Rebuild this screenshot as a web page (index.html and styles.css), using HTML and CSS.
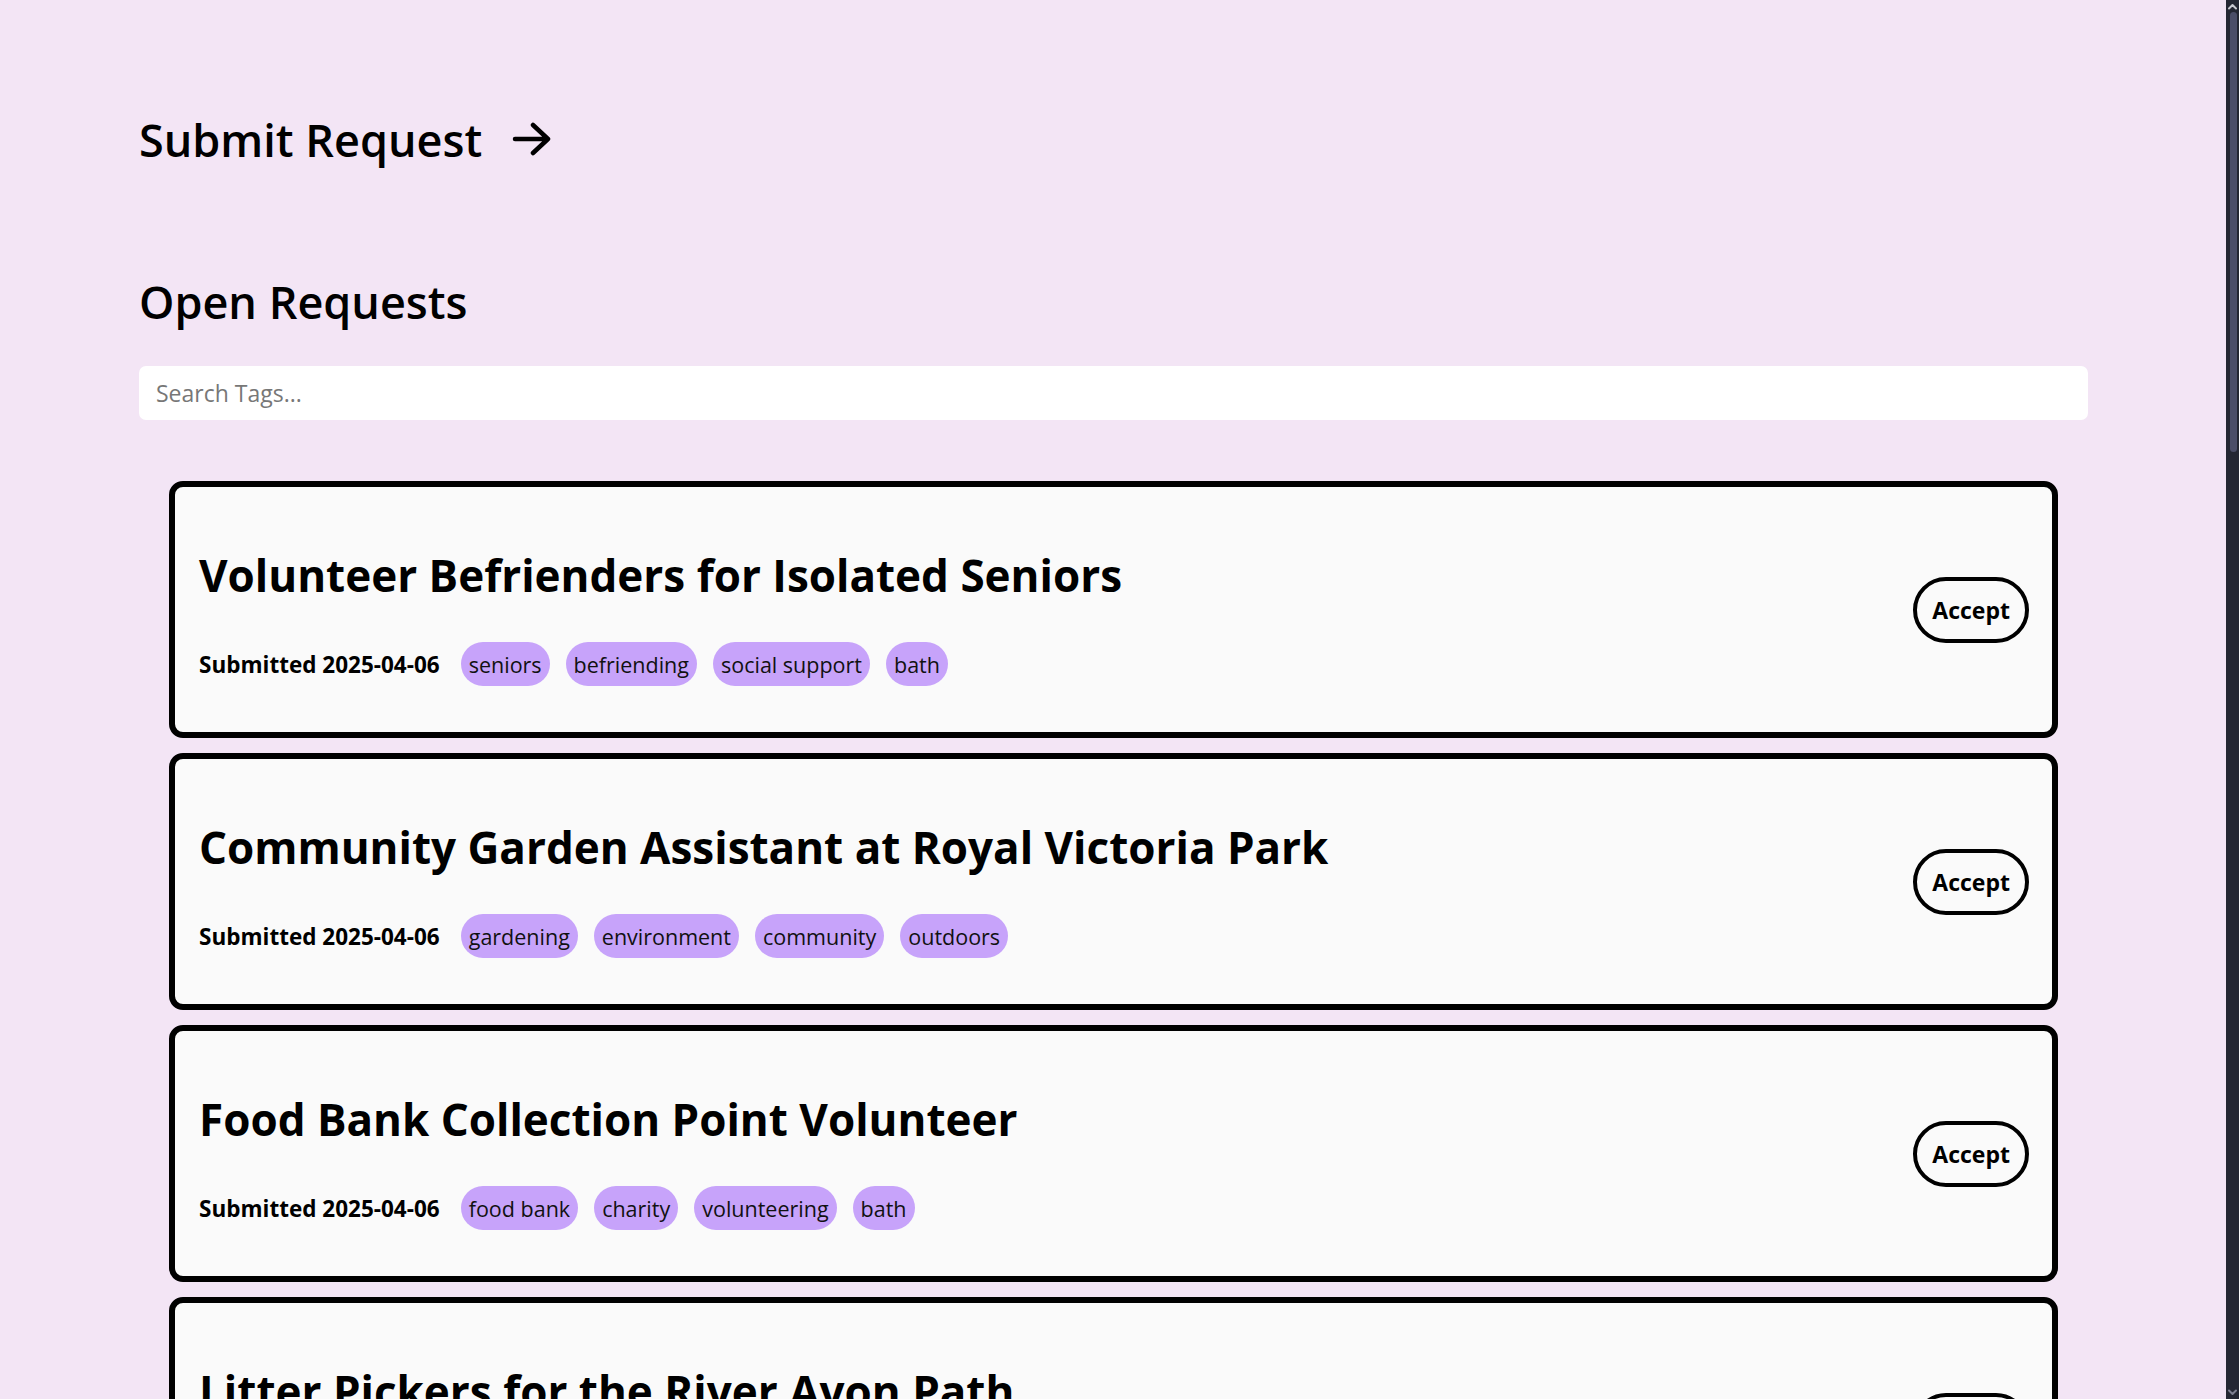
FILE: index.html
```html
<!DOCTYPE html>
<html lang="en">
<head>
<meta charset="utf-8">
<title>Open Requests</title>
<link rel="stylesheet" href="styles.css">
</head>
<body>
<div class="viewport">
<main class="page">
  <a class="submit-link" href="#">
    <span>Submit Request</span>
    <svg class="arrow" viewBox="0 0 40 34" width="40" height="34" aria-hidden="true">
      <path d="M3 17 H36 M21 3 L36 17 L21 31" fill="none" stroke="#000" stroke-width="4.5" stroke-linecap="round" stroke-linejoin="round"/>
    </svg>
  </a>

  <h2 class="section-title">Open Requests</h2>

  <input class="search" type="text" placeholder="Search Tags...">

  <ul class="requests">
    <li class="card">
      <div class="card-body">
        <h3 class="card-title">Volunteer Befrienders for Isolated Seniors</h3>
        <div class="meta"><span class="date">Submitted 2025-04-06</span><span class="tag">seniors</span><span class="tag">befriending</span><span class="tag">social support</span><span class="tag">bath</span></div>
      </div>
      <button class="accept">Accept</button>
    </li>
    <li class="card">
      <div class="card-body">
        <h3 class="card-title">Community Garden Assistant at Royal Victoria Park</h3>
        <div class="meta"><span class="date">Submitted 2025-04-06</span><span class="tag">gardening</span><span class="tag">environment</span><span class="tag">community</span><span class="tag">outdoors</span></div>
      </div>
      <button class="accept">Accept</button>
    </li>
    <li class="card">
      <div class="card-body">
        <h3 class="card-title">Food Bank Collection Point Volunteer</h3>
        <div class="meta"><span class="date">Submitted 2025-04-06</span><span class="tag">food bank</span><span class="tag">charity</span><span class="tag">volunteering</span><span class="tag">bath</span></div>
      </div>
      <button class="accept">Accept</button>
    </li>
    <li class="card">
      <div class="card-body">
        <h3 class="card-title">Litter Pickers for the River Avon Path</h3>
        <div class="meta"><span class="date">Submitted 2025-04-06</span><span class="tag">litter picking</span><span class="tag">environment</span><span class="tag">river avon</span><span class="tag">bath</span></div>
      </div>
      <button class="accept">Accept</button>
    </li>
    <li class="card">
      <div class="card-body">
        <h3 class="card-title">Reading Buddies at a Local Primary School</h3>
        <div class="meta"><span class="date">Submitted 2025-04-06</span><span class="tag">education</span><span class="tag">children</span><span class="tag">reading</span></div>
      </div>
      <button class="accept">Accept</button>
    </li>
    <li class="card">
      <div class="card-body">
        <h3 class="card-title">Dog Walking for Housebound Residents</h3>
        <div class="meta"><span class="date">Submitted 2025-04-06</span><span class="tag">animals</span><span class="tag">dog walking</span><span class="tag">seniors</span><span class="tag">bath</span></div>
      </div>
      <button class="accept">Accept</button>
    </li>
    <li class="card">
      <div class="card-body">
        <h3 class="card-title">Charity Shop Assistant on Milsom Street</h3>
        <div class="meta"><span class="date">Submitted 2025-04-06</span><span class="tag">retail</span><span class="tag">charity</span><span class="tag">bath</span></div>
      </div>
      <button class="accept">Accept</button>
    </li>
    <li class="card">
      <div class="card-body">
        <h3 class="card-title">Welcome Host at the Roman Baths</h3>
        <div class="meta"><span class="date">Submitted 2025-04-06</span><span class="tag">heritage</span><span class="tag">tourism</span><span class="tag">bath</span></div>
      </div>
      <button class="accept">Accept</button>
    </li>
    <li class="card">
      <div class="card-body">
        <h3 class="card-title">Youth Football Coach Assistant</h3>
        <div class="meta"><span class="date">Submitted 2025-04-06</span><span class="tag">sports</span><span class="tag">youth</span><span class="tag">coaching</span></div>
      </div>
      <button class="accept">Accept</button>
    </li>
    <li class="card">
      <div class="card-body">
        <h3 class="card-title">Volunteer Driver for Hospital Appointments</h3>
        <div class="meta"><span class="date">Submitted 2025-04-06</span><span class="tag">transport</span><span class="tag">health</span><span class="tag">driving</span></div>
      </div>
      <button class="accept">Accept</button>
    </li>
    <li class="card">
      <div class="card-body">
        <h3 class="card-title">Community Café Kitchen Helper</h3>
        <div class="meta"><span class="date">Submitted 2025-04-06</span><span class="tag">cooking</span><span class="tag">community</span><span class="tag">food</span></div>
      </div>
      <button class="accept">Accept</button>
    </li>
    <li class="card">
      <div class="card-body">
        <h3 class="card-title">Digital Skills Tutor for Older Adults</h3>
        <div class="meta"><span class="date">Submitted 2025-04-06</span><span class="tag">technology</span><span class="tag">seniors</span><span class="tag">education</span></div>
      </div>
      <button class="accept">Accept</button>
    </li>
    <li class="card">
      <div class="card-body">
        <h3 class="card-title">Evening Support at the Homeless Shelter</h3>
        <div class="meta"><span class="date">Submitted 2025-04-06</span><span class="tag">housing</span><span class="tag">support</span><span class="tag">charity</span><span class="tag">bath</span></div>
      </div>
      <button class="accept">Accept</button>
    </li>
    <li class="card">
      <div class="card-body">
        <h3 class="card-title">Tree Planting Day at Alice Park</h3>
        <div class="meta"><span class="date">Submitted 2025-04-06</span><span class="tag">environment</span><span class="tag">trees</span><span class="tag">outdoors</span></div>
      </div>
      <button class="accept">Accept</button>
    </li>
  </ul>
</main>
</div>
<div class="scrollbar" aria-hidden="true">
  <svg class="sb-btn" viewBox="0 0 13 12" width="13" height="12"><path d="M3 8.5 L6.5 5 L10 8.5" fill="none" stroke="#c8c9d0" stroke-width="2" stroke-linecap="round" stroke-linejoin="round"/></svg>
  <div class="sb-track"><div class="sb-thumb"></div></div>
  <svg class="sb-btn" viewBox="0 0 13 12" width="13" height="12"><path d="M3 3.5 L6.5 7 L10 3.5" fill="none" stroke="#7d7f90" stroke-width="2" stroke-linecap="round" stroke-linejoin="round"/></svg>
</div>
</body>
</html>
```

FILE: styles.css
```css
html,
body {
  height: 100%;
}

body {
  margin: 0;
  display: flex;
  overflow: hidden;
  background: #f3e5f5;
  color: #000;
  font-family: "Open Sans", "Noto Sans", sans-serif;
}

.viewport {
  flex: 1;
  min-width: 0;
  height: 100vh;
  overflow: hidden;
}

.scrollbar {
  flex: 0 0 13px;
  height: 100vh;
  display: flex;
  flex-direction: column;
  background: #242733;
}

.sb-btn {
  display: block;
  flex: 0 0 12px;
}

.sb-track {
  flex: 1;
  padding: 0 2px 0 4px;
}

.sb-thumb {
  height: 440px;
  border-radius: 4px;
  background: #4b4e68;
}

.page {
  padding: 113px 138px 80px 139px;
}

.submit-link {
  display: inline-flex;
  align-items: center;
  gap: 30px;
  color: #000;
  text-decoration: none;
  font-size: 45px;
  line-height: 54px;
  font-weight: 600;
}

.arrow {
  display: block;
  margin-top: -2px;
}

.section-title {
  margin: 108px 0 37px;
  font-size: 45px;
  line-height: 54px;
  font-weight: 600;
}

.search {
  display: block;
  box-sizing: border-box;
  width: 100%;
  height: 54px;
  margin: 0;
  padding: 0 17px;
  border: none;
  border-radius: 7px;
  background: #fff;
  font-family: "Open Sans", "Noto Sans", sans-serif;
  font-size: 23px;
  color: #000;
  outline: none;
}
.search::placeholder {
  color: #777;
}

.requests {
  list-style: none;
  margin: 61px 30px 0;
  padding: 0;
  display: flex;
  flex-direction: column;
  gap: 15px;
}

.card {
  box-sizing: border-box;
  height: 257px;
  display: flex;
  align-items: center;
  justify-content: space-between;
  padding: 0 23px 0 24px;
  border: 6px solid #000;
  border-radius: 14px;
  background: #fafafa;
}

.card-body {
  display: flex;
  flex-direction: column;
  gap: 40px;
  padding-top: 16px;
}

.card-title {
  margin: 0;
  font-size: 44px;
  line-height: 53px;
  font-weight: 700;
}

.meta {
  display: flex;
  align-items: center;
  gap: 16px;
}

.date {
  font-size: 22.5px;
  font-weight: 700;
  margin-right: 5px;
}

.tag {
  display: inline-flex;
  align-items: center;
  height: 44px;
  padding: 0 8px;
  border-radius: 22px;
  background: #c7a3fa;
  font-size: 21.5px;
  color: #111;
}

.accept {
  box-sizing: border-box;
  height: 66px;
  padding: 0 15px;
  border: 4px solid #000;
  border-radius: 33px;
  background: transparent;
  color: #000;
  font-family: "Open Sans", "Noto Sans", sans-serif;
  font-size: 23px;
  font-weight: 700;
  cursor: pointer;
}
```
